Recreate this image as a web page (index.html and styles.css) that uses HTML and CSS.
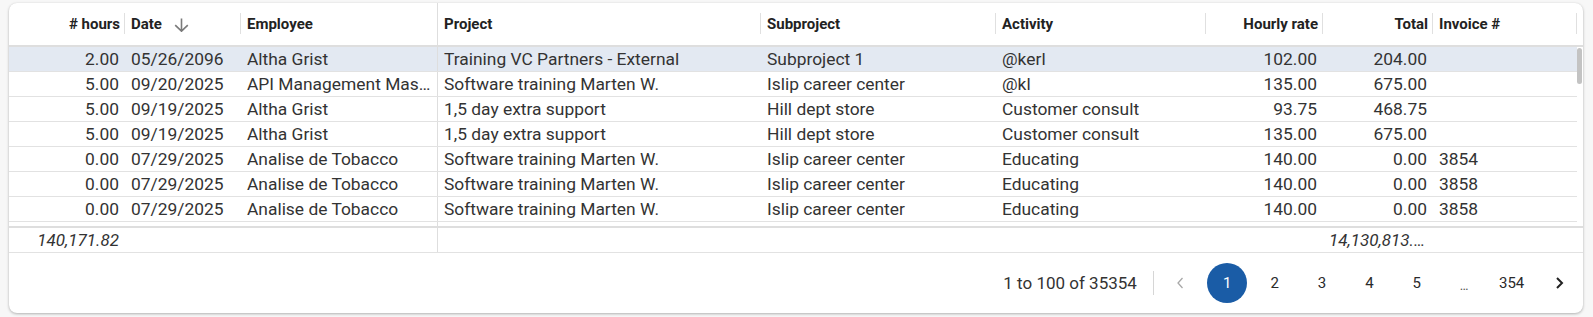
FILE: index.html
```html
<!DOCTYPE html>
<html lang="en">
<head>
<meta charset="utf-8">
<title>Time entries</title>
<link rel="stylesheet" href="styles.css">
</head>
<body>
<div class="card">
  <div class="head">
    <div class="hc right sep">
      <span># hours</span>
    </div>
    <div class="hc sep">
      <span>Date</span>
      <svg class="sort" width="15" height="14" viewBox="0 0 15 14"><path d="M7.5 0.5V13M1.2 7.2L7.5 13.2L13.8 7.2" fill="none" stroke="#7b7b7b" stroke-width="1.6"/></svg>
    </div>
    <div class="hc pin"><span>Employee</span></div>
    <div class="hc sep"><span>Project</span></div>
    <div class="hc sep"><span>Subproject</span></div>
    <div class="hc sep"><span>Activity</span></div>
    <div class="hc right sep"><span>Hourly rate</span></div>
    <div class="hc right sep"><span>Total</span></div>
    <div class="hc sep"><span>Invoice #</span></div>
    <div class="hc gutter"></div>
  </div>

  <div class="body">
    <div class="rows">
      <div class="row selected">
        <div class="c right">2.00</div><div class="c">05/26/2096</div><div class="c pin">Altha Grist</div><div class="c">Training VC Partners - External</div><div class="c">Subproject 1</div><div class="c">@kerl</div><div class="c right">102.00</div><div class="c right">204.00</div><div class="c"></div>
      </div>
      <div class="row">
        <div class="c right">5.00</div><div class="c">09/20/2025</div><div class="c pin">API Management Master Class</div><div class="c">Software training Marten W.</div><div class="c">Islip career center</div><div class="c">@kl</div><div class="c right">135.00</div><div class="c right">675.00</div><div class="c"></div>
      </div>
      <div class="row">
        <div class="c right">5.00</div><div class="c">09/19/2025</div><div class="c pin">Altha Grist</div><div class="c">1,5 day extra support</div><div class="c">Hill dept store</div><div class="c">Customer consult</div><div class="c right">93.75</div><div class="c right">468.75</div><div class="c"></div>
      </div>
      <div class="row">
        <div class="c right">5.00</div><div class="c">09/19/2025</div><div class="c pin">Altha Grist</div><div class="c">1,5 day extra support</div><div class="c">Hill dept store</div><div class="c">Customer consult</div><div class="c right">135.00</div><div class="c right">675.00</div><div class="c"></div>
      </div>
      <div class="row">
        <div class="c right">0.00</div><div class="c">07/29/2025</div><div class="c pin">Analise de Tobacco</div><div class="c">Software training Marten W.</div><div class="c">Islip career center</div><div class="c">Educating</div><div class="c right">140.00</div><div class="c right">0.00</div><div class="c">3854</div>
      </div>
      <div class="row">
        <div class="c right">0.00</div><div class="c">07/29/2025</div><div class="c pin">Analise de Tobacco</div><div class="c">Software training Marten W.</div><div class="c">Islip career center</div><div class="c">Educating</div><div class="c right">140.00</div><div class="c right">0.00</div><div class="c">3858</div>
      </div>
      <div class="row">
        <div class="c right">0.00</div><div class="c">07/29/2025</div><div class="c pin">Analise de Tobacco</div><div class="c">Software training Marten W.</div><div class="c">Islip career center</div><div class="c">Educating</div><div class="c right">140.00</div><div class="c right">0.00</div><div class="c">3858</div>
      </div>
      <div class="row">
        <div class="c right"></div><div class="c"></div><div class="c pin"></div><div class="c"></div><div class="c"></div><div class="c"></div><div class="c right"></div><div class="c right"></div><div class="c"></div>
      </div>
    </div>
    <div class="track"><div class="thumb"></div></div>
  </div>

  <div class="foot">
    <div class="c right it">140,171.82</div><div class="c"></div><div class="c pin"></div><div class="c"></div><div class="c"></div><div class="c"></div><div class="c"></div><div class="c right it clip">14,130,813.42</div><div class="c"></div><div class="c"></div>
  </div>

  <div class="pager">
    <span class="range">1 to 100 of 35354</span>
    <span class="vsep"></span>
    <div class="pages">
      <span class="pg nav"><svg width="8" height="12" viewBox="0 0 8 12"><path d="M6.5 1L2 6l4.5 5" fill="none" stroke="#a8a8a8" stroke-width="1.3"/></svg></span>
      <span class="pg active">1</span>
      <span class="pg">2</span>
      <span class="pg">3</span>
      <span class="pg">4</span>
      <span class="pg">5</span>
      <span class="pg dots">…</span>
      <span class="pg">354</span>
      <span class="pg nav"><svg width="9" height="12" viewBox="0 0 9 12"><path d="M2 1l5 5-5 5" fill="none" stroke="#222" stroke-width="2"/></svg></span>
    </div>
  </div>
</div>
</body>
</html>
```

FILE: styles.css
```css
* { box-sizing: border-box; }

html, body {
  margin: 0;
  background: #f7f7f7;
}

body {
  padding: 3px 10px 4px 9px;
  font-family: Roboto, "Liberation Sans", Arial, sans-serif;
  color: #333;
}

.card {
  width: 1574px;
  height: 310px;
  background: #fff;
  border-radius: 8px;
  box-shadow: 0 1px 3px rgba(0, 0, 0, 0.28), 0 0 1px rgba(0, 0, 0, 0.08);
  overflow: hidden;
  display: flex;
  flex-direction: column;
}

.head,
.row,
.foot {
  display: grid;
  grid-template-columns: 116px 116px 197px 323px 235px 210px 117px 110px 144px;
}

.head,
.foot {
  grid-template-columns: 116px 116px 197px 323px 235px 210px 117px 110px 144px 6px;
}

.head {
  height: 44px;
  border-bottom: 2px solid #dedede;
  flex: none;
}

.hc {
  position: relative;
  display: flex;
  align-items: center;
  padding: 0 5px 0 6px;
  font-size: 15px;
  font-weight: 700;
  color: #222;
  white-space: nowrap;
}

.hc.right { justify-content: flex-end; }

.hc.sep::after {
  content: "";
  position: absolute;
  right: 0;
  top: 10px;
  bottom: 11px;
  width: 1px;
  background: #e0e0e0;
}

.pin { border-right: 1px solid #dedede; }

.sort { margin-left: 12px; margin-top: 1px; }

.body {
  display: flex;
  height: 179px;
  overflow: hidden;
  flex: none;
}

.rows {
  flex: 0 0 1568px;
}

.row {
  height: 25px;
  border-bottom: 1px solid #e2e2e2;
}

.row.selected { background: #e3e9f2; }

.c {
  padding: 0 6px;
  font-size: 17.4px;
  line-height: 24px;
  white-space: nowrap;
  overflow: hidden;
  text-overflow: ellipsis;
  color: #333;
}

.c.right { text-align: right; }

.track {
  flex: 0 0 6px;
  padding-top: 1px;
}

.thumb {
  width: 5px;
  height: 36px;
  border-radius: 3px;
  background: #c3c3c3;
}

.foot {
  height: 27px;
  border-top: 2px solid #dedede;
  border-bottom: 1px solid #e2e2e2;
  flex: none;
}

.foot .c { font-size: 17px; }

.it { font-style: italic; }

.clip { text-align: left; }

.pager {
  flex: 1;
  display: flex;
  align-items: center;
  justify-content: flex-end;
  padding-right: 4px;
}

.range {
  font-size: 17px;
  color: #333;
  margin-right: 16px;
}

.vsep {
  width: 1px;
  height: 24px;
  background: #d6d6d6;
  margin-right: 6px;
}

.pages {
  display: flex;
  gap: 7.4px;
  align-items: center;
}

.pg {
  width: 40px;
  height: 40px;
  border-radius: 50%;
  display: flex;
  align-items: center;
  justify-content: center;
  font-size: 15px;
  color: #2a2a2a;
}

.pg.active {
  background: #1a5ca6;
  color: #fff;
}

.pg.dots {
  font-size: 13px;
  color: #555;
  padding-top: 4px;
}
```
